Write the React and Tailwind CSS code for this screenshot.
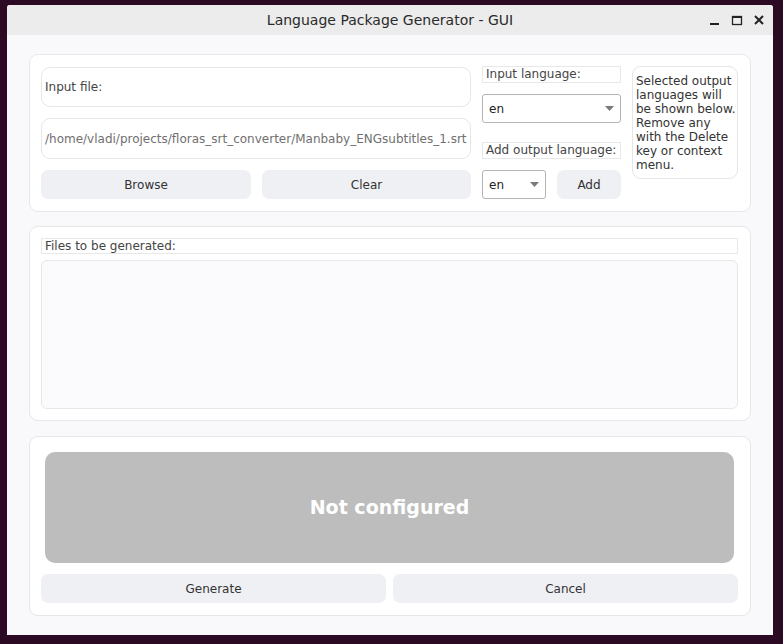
import React from 'react'

const font = { fontFamily: '"DejaVu Sans", "Liberation Sans", sans-serif' }

const Arrow = () => (
  <svg width="9" height="5" viewBox="0 0 9 5" className="shrink-0">
    <path d="M0 0 L9 0 L4.5 5 Z" fill="#7a7a7a" />
  </svg>
)

const Button = ({ children, className = '' }) => (
  <div className={`h-[29px] flex items-center justify-center rounded-[7px] bg-[#eff0f3] text-[12px] text-[#333] ${className}`}>
    {children}
  </div>
)

const Combo = ({ className = '' }) => (
  <div className={`h-[29px] flex items-center justify-between border border-[#b4b4b4] rounded-[3px] bg-white pl-[6px] pr-[6px] text-[12px] text-[#222] ${className}`}>
    <span>en</span>
    <Arrow />
  </div>
)

const Label = ({ children, className = '' }) => (
  <div className={`border border-[#e8e8e8] bg-white px-[3px] text-[12px] leading-[15px] text-[#444] ${className}`}>
    {children}
  </div>
)

const noteLines = [
  'Selected output',
  'languages will',
  'be shown below.',
  'Remove any',
  'with the Delete',
  'key or context',
  'menu.',
]

const App = () => {
  return (
    <div className="w-[783px] h-[644px] bg-[#2c0a23] pt-[5px] pl-[7px]" style={font}>
      <div className="w-[766px] h-[630px] flex flex-col bg-[#f9f9fb] rounded-t-[3px] overflow-hidden">
        {/* title bar */}
        <div className="h-[30px] shrink-0 bg-[#ececec] flex items-center relative">
          <div className="flex-1 text-center text-[14px] text-[#2a2a2a]">Language Package Generator - GUI</div>
          <div className="absolute right-[8px] top-0 h-full flex items-center gap-[10px]">
            <svg width="12" height="12" viewBox="0 0 12 12"><rect x="1" y="9" width="9" height="2" fill="#222" /></svg>
            <svg width="12" height="12" viewBox="0 0 12 12"><rect x="1.5" y="2.5" width="9" height="8" fill="none" stroke="#222" strokeWidth="1.3" /><rect x="1.5" y="2" width="9" height="2" fill="#222" /></svg>
            <svg width="12" height="12" viewBox="0 0 12 12"><path d="M2 2 L10 10 M10 2 L2 10" stroke="#222" strokeWidth="2" /></svg>
          </div>
        </div>

        <div className="flex-1 flex flex-col px-[22px] pt-[19px] pb-[19px]">
          {/* top card */}
          <div className="h-[158px] shrink-0 bg-white border border-[#e7e7ea] rounded-[9px] pl-[11px] pr-[12px] pt-[11px] flex gap-[11px]">
            <div className="w-[430px] flex flex-col gap-[11px] pt-[1px]">
              <div className="h-[40px] border border-[#e6e6e8] rounded-[9px] flex items-center px-[3px] text-[12px] text-[#444]">Input file:</div>
              <div className="h-[41px] border border-[#e6e6e8] rounded-[9px] flex items-center px-[3px] text-[12px] text-[#707070] whitespace-nowrap overflow-hidden">/home/vladi/projects/floras_srt_converter/Manbaby_ENGsubtitles_1.srt</div>
              <div className="flex gap-[11px]">
                <Button className="w-[210px]">Browse</Button>
                <Button className="w-[209px]">Clear</Button>
              </div>
            </div>
            <div className="w-[139px] flex flex-col">
              <Label className="h-[17px] leading-[15px]">Input language:</Label>
              <Combo className="mt-[11px]" />
              <Label className="h-[17px] mt-[19px]">Add output language:</Label>
              <div className="flex gap-[11px] mt-[11px]">
                <Combo className="w-[64px]" />
                <Button className="w-[64px]">Add</Button>
              </div>
            </div>
            <div className="w-[106px] h-[113px] border border-[#e6e6e8] rounded-[9px] pl-[3px] pt-[7px] text-[12px] leading-[14px] text-[#333] whitespace-nowrap">
              {noteLines.map((line) => (
                <div key={line}>{line}</div>
              ))}
            </div>
          </div>

          {/* files card */}
          <div className="h-[195px] shrink-0 mt-[14px] bg-white border border-[#e7e7ea] rounded-[9px] pl-[11px] pr-[12px] pt-[11px] pb-[11px] flex flex-col gap-[6px]">
            <Label className="h-[16px] leading-[14px]">Files to be generated:</Label>
            <div className="flex-1 border border-[#e8e8ea] rounded-[6px] bg-[#fbfbfd]" />
          </div>

          {/* status card */}
          <div className="h-[180px] shrink-0 mt-[15px] bg-white border border-[#e7e7ea] rounded-[9px] pl-[11px] pr-[12px] pt-[15px] flex flex-col">
            <div className="h-[111px] mx-[4px] rounded-[10px] bg-[#bdbdbd] flex items-center justify-center text-white font-bold text-[19px]">
              Not configured
            </div>
            <div className="flex gap-[7px] mt-[11px]">
              <Button className="flex-1">Generate</Button>
              <Button className="flex-1">Cancel</Button>
            </div>
          </div>
        </div>
      </div>
    </div>
  )
}

export default App
